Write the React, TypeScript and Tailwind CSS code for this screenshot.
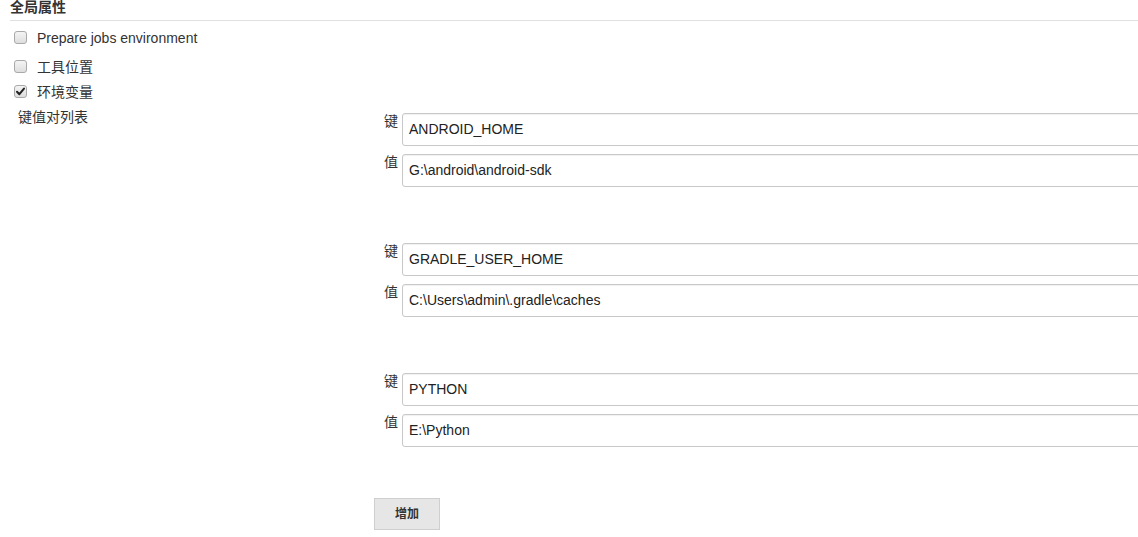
import React from "react";

const font = { fontFamily: '"Liberation Sans", Arial, "Noto Sans CJK SC", sans-serif' };

function Box({ checked }: { checked?: boolean }) {
  return (
    <span className="relative inline-block shrink-0 w-[13px] h-[13px] rounded-[3px] border border-[#a9a9a9] bg-gradient-to-b from-[#f4f4f4] to-[#dedede]">
      {checked && (
        <svg viewBox="0 0 13 13" className="absolute left-[-1px] top-[-1px] w-[13px] h-[13px]">
          <path d="M3 6.8 L5.4 9.2 L10 3.6" fill="none" stroke="#222" strokeWidth="2" strokeLinecap="round" strokeLinejoin="round" />
        </svg>
      )}
    </span>
  );
}

function Row({ label, checked, cls }: { label: string; checked?: boolean; cls: string }) {
  return (
    <div className={`flex items-center h-[20px] pl-[4px] ${cls}`}>
      <Box checked={checked} />
      <span className="ml-[10px] text-[14px] leading-[16px] text-[#333] translate-y-[1px]">{label}</span>
    </div>
  );
}

function Field({ label, value, cls }: { label: string; value: string; cls?: string }) {
  return (
    <div className={`flex ${cls ?? ""}`}>
      <div className="w-[18px] shrink-0 text-[14px] leading-[16px] text-[#333]">{label}</div>
      <div className="w-[800px] shrink-0 h-[33px] border border-[#c8c8c8] rounded-[3px] shadow-[inset_0_1px_1px_rgba(0,0,0,0.06)] bg-white flex items-center pl-[6px] text-[14px] text-[#222]">
        {value}
      </div>
    </div>
  );
}

const pairs = [
  ["ANDROID_HOME", "G:\\android\\android-sdk"],
  ["GRADLE_USER_HOME", "C:\\Users\\admin\\.gradle\\caches"],
  ["PYTHON", "E:\\Python"],
];

export default function App() {
  return (
    <div className="w-full overflow-hidden bg-white h-[537px]" style={font}>
      <div className="pl-[10px]">
        <div className="h-[21px] border-b border-[#e0e0e0] text-[14px] leading-[15px] font-bold text-[#333]">全局属性</div>
        <Row label="Prepare jobs environment" cls="mt-[6px]" />
        <Row label="工具位置" cls="mt-[9px]" />
        <Row label="环境变量" checked cls="mt-[5px]" />
      </div>
      <div className="flex mt-[8px]">
        <div className="w-[374px] shrink-0 pl-[18px] text-[14px] leading-[16px] text-[#333]">键值对列表</div>
        <div className="flex flex-col shrink-0 pt-[4px]">
          {pairs.map(([k, v], i) => (
            <div key={k} className={`pl-[10px] flex flex-col gap-[8px] ${i > 0 ? "mt-[56px]" : ""}`}>
              <Field label="键" value={k} />
              <Field label="值" value={v} />
            </div>
          ))}
          <div className="mt-[51px]">
            <button className="w-[66px] h-[32px] bg-[#e6e6e6] border border-[#cfcfcf] text-[12px] font-bold text-[#333]">
              增加
            </button>
          </div>
        </div>
      </div>
    </div>
  );
}
